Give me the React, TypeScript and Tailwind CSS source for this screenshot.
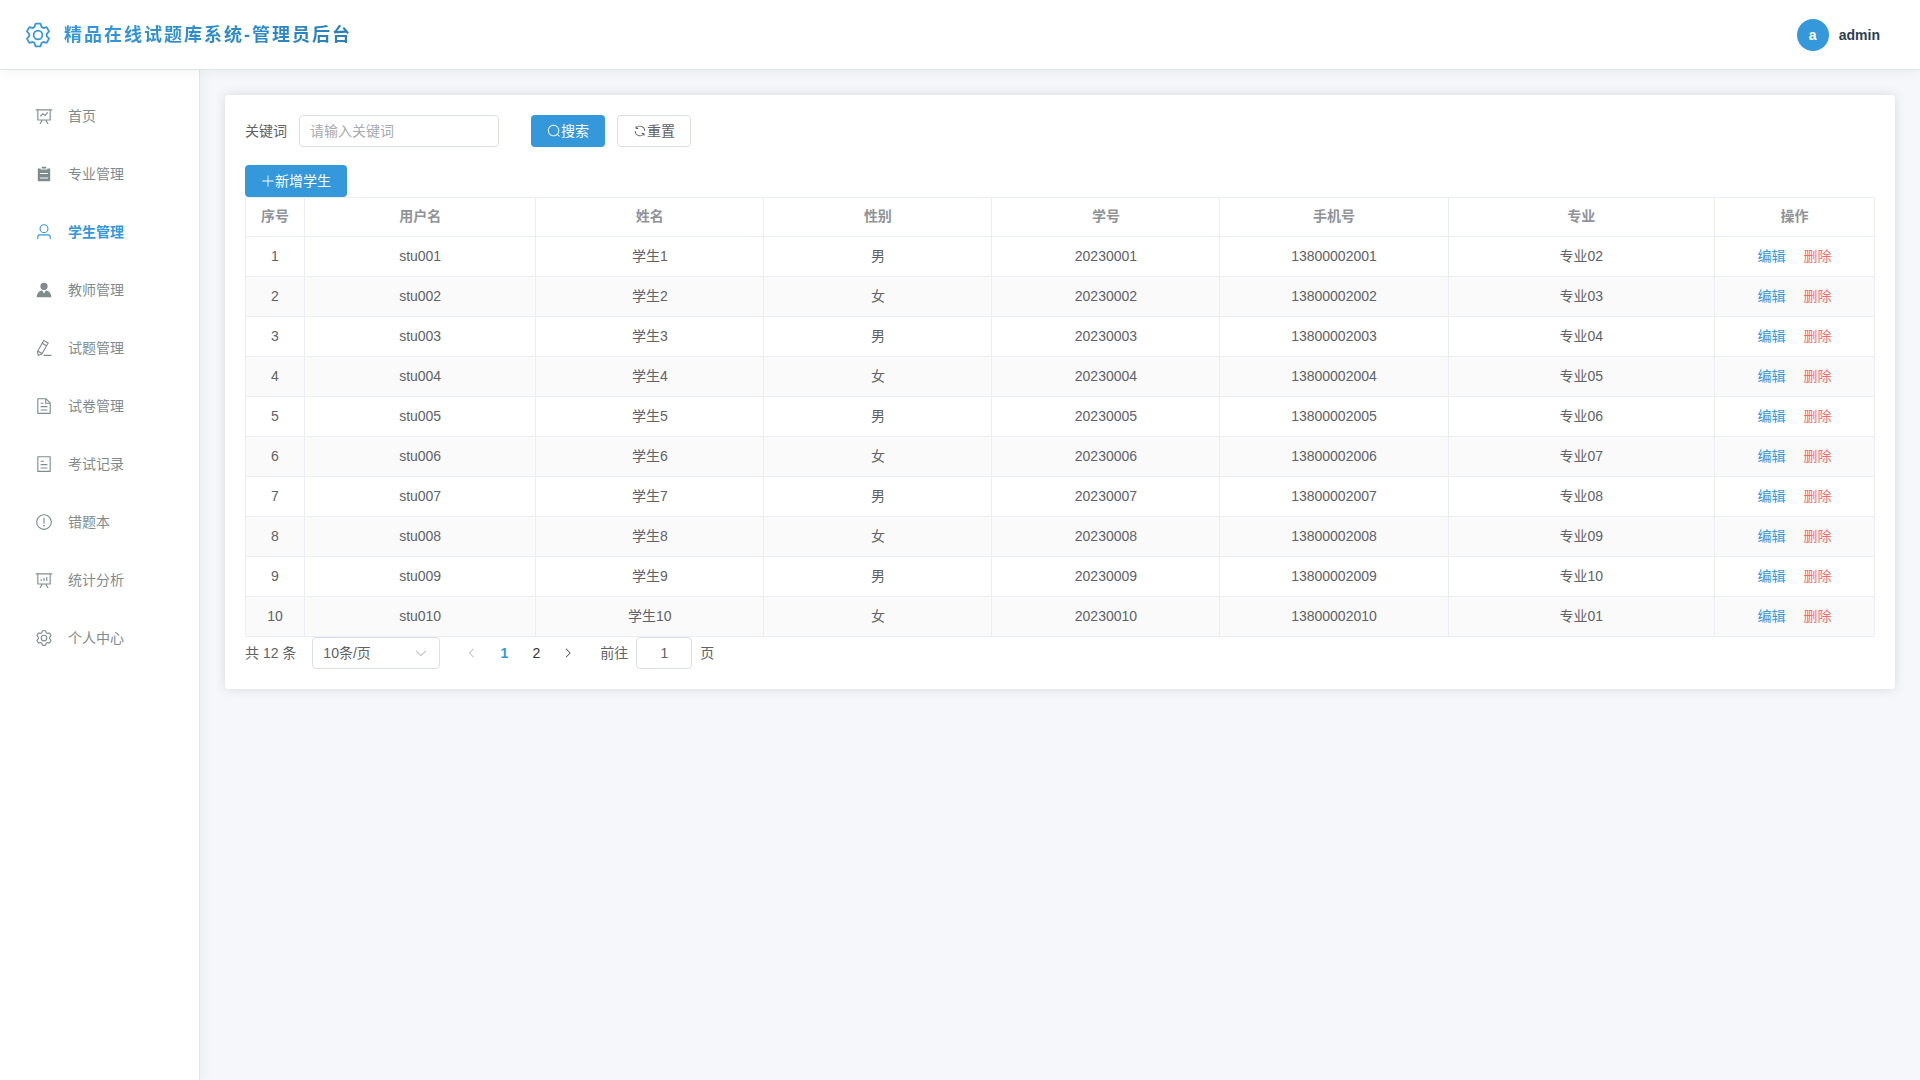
import { useState } from 'react';

const ICONS = {
  setting:
    'M600.704 64a32 32 0 0 1 30.464 22.208l35.2 109.376c14.784 7.232 28.928 15.36 42.432 24.512l112.384-24.192a32 32 0 0 1 34.432 15.36L944.32 364.8a32 32 0 0 1-4.032 37.504l-77.12 85.12a357.12 357.12 0 0 1 0 49.024l77.12 85.248a32 32 0 0 1 4.032 37.504l-88.704 153.6a32 32 0 0 1-34.432 15.296L708.8 803.904c-13.44 9.088-27.648 17.28-42.368 24.512l-35.264 109.376A32 32 0 0 1 600.704 960H423.296a32 32 0 0 1-30.464-22.208L357.696 828.48a351.616 351.616 0 0 1-42.56-24.64l-112.32 24.256a32 32 0 0 1-34.432-15.36L79.68 659.2a32 32 0 0 1 4.032-37.504l77.12-85.248a357.12 357.12 0 0 1 0-48.896l-77.12-85.248A32 32 0 0 1 79.68 364.8l88.704-153.6a32 32 0 0 1 34.432-15.296l112.32 24.256c13.568-9.152 27.776-17.408 42.56-24.64l35.2-109.312A32 32 0 0 1 423.232 64H600.64zm-23.424 64H446.72l-36.352 113.088-24.512 11.968a294.113 294.113 0 0 0-34.816 20.096l-22.656 15.36-116.224-25.088-65.28 113.152 79.68 88.192-1.92 27.136a293.12 293.12 0 0 0 0 40.192l1.92 27.136-79.808 88.192 65.344 113.152 116.224-25.024 22.656 15.296a294.113 294.113 0 0 0 34.816 20.096l24.512 11.968L446.72 896h130.688l36.48-113.152 24.448-11.904a288.282 288.282 0 0 0 34.752-20.096l22.592-15.296 116.288 25.024 65.28-113.152-79.744-88.192 1.92-27.136a293.12 293.12 0 0 0 0-40.256l-1.92-27.136 79.808-88.128-65.344-113.152-116.288 24.96-22.592-15.232a287.616 287.616 0 0 0-34.752-20.096l-24.448-11.904L577.344 128zM512 320a192 192 0 1 1 0 384 192 192 0 0 1 0-384zm0 64a128 128 0 1 0 0 256 128 128 0 0 0 0-256z',
  dataLine:
    'M359.168 768H160a32 32 0 0 1-32-32V192H64a32 32 0 0 1 0-64h896a32 32 0 1 1 0 64h-64v544a32 32 0 0 1-32 32H665.216l110.848 192h-73.856L591.36 768H433.024L322.176 960H248.32l110.848-192zM832 192H192v512h640V192zM342.656 534.656a32 32 0 1 1-45.312-45.312L444.992 341.76l125.44 94.08L679.04 300.032a32 32 0 1 1 49.92 39.936L581.632 524.224 451.008 426.24 342.656 534.592z',
  dataAnalysis:
    'm665.216 768 110.848 192h-73.856L591.36 768H433.024L322.176 960H248.32l110.848-192H160a32 32 0 0 1-32-32V192H64a32 32 0 0 1 0-64h896a32 32 0 1 1 0 64h-64v544a32 32 0 0 1-32 32H665.216zM832 192H192v512h640V192zM352 448a32 32 0 0 1 32 32v64a32 32 0 0 1-64 0v-64a32 32 0 0 1 32-32zm160-64a32 32 0 0 1 32 32v128a32 32 0 0 1-64 0V416a32 32 0 0 1 32-32zm160-64a32 32 0 0 1 32 32v192a32 32 0 1 1-64 0V352a32 32 0 0 1 32-32z',
  list: 'M704 192h160v736H160V192h160v64h384v-64zM288 512h448v-64H288v64zm0 256h448v-64H288v64zm96-576V96h256v96H384z',
  user: 'M512 512a192 192 0 1 0 0-384 192 192 0 0 0 0 384zm0 64a256 256 0 1 1 0-512 256 256 0 0 1 0 512zm320 320v-96a96 96 0 0 0-96-96H288a96 96 0 0 0-96 96v96a32 32 0 1 1-64 0v-96a160 160 0 0 1 160-160h448a160 160 0 0 1 160 160v96a32 32 0 1 1-64 0z',
  avatar:
    'M628.736 528.896A416 416 0 0 1 928 928H96a415.872 415.872 0 0 1 299.264-399.104L512 704l116.736-175.104zM720 304a208 208 0 1 1-416 0 208 208 0 0 1 416 0z',
  editPen:
    'm199.04 672.64 193.984 112 224-387.968-193.92-112-224 388.032zm-23.872 60.16 32.896 148.288 144.896-45.696L175.168 732.8zM455.04 229.248l193.92 112 56.704-98.112-193.984-112-56.64 98.112zM104.32 708.8l384-665.024 304.768 175.936L409.152 884.8h.064l-248.448 78.336L104.32 708.8zm384 254.272v-64h448v64h-448z',
  document:
    'M832 384H576V128H192v768h640V384zm-26.496-64L640 154.496V320h165.504zM160 64h480l256 256v608a32 32 0 0 1-32 32H160a32 32 0 0 1-32-32V96a32 32 0 0 1 32-32zm160 448h384v64H320v-64zm0-192h160v64H320v-64zm0 384h384v64H320v-64z',
  tickets:
    'M192 128v768h640V128H192zm-32-64h704a32 32 0 0 1 32 32v832a32 32 0 0 1-32 32H160a32 32 0 0 1-32-32V96a32 32 0 0 1 32-32zm160 448h384v64H320v-64zm0-192h192v64H320v-64zm0 384h384v64H320v-64z',
  warning:
    'M512 64a448 448 0 1 1 0 896 448 448 0 0 1 0-896zm0 832a384 384 0 0 0 0-768 384 384 0 0 0 0 768zm48-176a48 48 0 1 1-96 0 48 48 0 0 1 96 0zm-48-464a32 32 0 0 1 32 32v288a32 32 0 0 1-64 0V288a32 32 0 0 1 32-32z',
  search:
    'm795.904 750.72 124.992 124.928a32 32 0 0 1-45.248 45.248L750.656 795.904a416 416 0 1 1 45.248-45.248zM480 832a352 352 0 1 0 0-704 352 352 0 0 0 0 704z',
  refresh:
    'M771.776 794.88A384 384 0 0 1 128 512h64a320 320 0 0 0 555.712 216.448H654.72a32 32 0 1 1 0-64h149.056a32 32 0 0 1 32 32v148.928a32 32 0 1 1-64 0v-50.56zM276.288 295.616h92.992a32 32 0 0 1 0 64H220.16a32 32 0 0 1-32-32V178.56a32 32 0 0 1 64 0v50.56A384 384 0 0 1 896.128 512h-64a320 320 0 0 0-555.776-216.384z',
  plus: 'M480 480V128a32 32 0 0 1 64 0v352h352a32 32 0 1 1 0 64H544v352a32 32 0 1 1-64 0V544H128a32 32 0 0 1 0-64h352z',
  arrowDown:
    'M831.872 340.864 512 652.672 192.128 340.864a30.592 30.592 0 0 0-42.752 0 29.12 29.12 0 0 0 0 41.6L489.664 714.24a32 32 0 0 0 44.672 0l340.288-331.712a29.12 29.12 0 0 0 0-41.728 30.592 30.592 0 0 0-42.752 0z',
  arrowLeft:
    'M609.408 149.376 277.76 489.6a32 32 0 0 0 0 44.672l331.648 340.352a29.12 29.12 0 0 0 41.728 0 30.592 30.592 0 0 0 0-42.752L339.264 511.936l311.872-319.872a30.592 30.592 0 0 0 0-42.688 29.12 29.12 0 0 0-41.728 0z',
  arrowRight:
    'M340.864 149.312a30.592 30.592 0 0 0 0 42.752L652.736 512 340.864 831.872a30.592 30.592 0 0 0 0 42.752 29.12 29.12 0 0 0 41.728 0L714.24 534.336a32 32 0 0 0 0-44.672L382.592 149.376a29.12 29.12 0 0 0-41.728 0z',
};

type IconName = keyof typeof ICONS;

function Icon({ name, className }: { name: IconName; className: string }) {
  return (
    <svg viewBox="0 0 1024 1024" fill="currentColor" aria-hidden="true" className={className}>
      <path d={ICONS[name]} />
    </svg>
  );
}

const MENU: { label: string; icon: IconName }[] = [
  { label: '首页', icon: 'dataLine' },
  { label: '专业管理', icon: 'list' },
  { label: '学生管理', icon: 'user' },
  { label: '教师管理', icon: 'avatar' },
  { label: '试题管理', icon: 'editPen' },
  { label: '试卷管理', icon: 'document' },
  { label: '考试记录', icon: 'tickets' },
  { label: '错题本', icon: 'warning' },
  { label: '统计分析', icon: 'dataAnalysis' },
  { label: '个人中心', icon: 'setting' },
];

const COLUMNS = [
  { title: '序号', width: 'w-[59px]' },
  { title: '用户名', width: 'w-[14.2%]' },
  { title: '姓名', width: 'w-[14%]' },
  { title: '性别', width: 'w-[14%]' },
  { title: '学号', width: 'w-[14%]' },
  { title: '手机号', width: 'w-[14%]' },
  { title: '专业', width: '' },
  { title: '操作', width: 'w-[160px]' },
];

const STUDENTS = Array.from({ length: 10 }, (_, i) => {
  const n = i + 1;
  const two = String(n).padStart(2, '0');
  return {
    n,
    username: `stu0${two}`,
    name: `学生${n}`,
    gender: n % 2 ? '男' : '女',
    number: `202300${two}`,
    phone: `138000020${two}`,
    major: `专业${String((n % 10) + 1).padStart(2, '0')}`,
  };
});

function Header() {
  return (
    <header className="relative z-10 flex h-[70px] items-center justify-between border-b border-[#e1e4e8] bg-white pr-10 pl-6 shadow-[0_2px_12px_rgba(0,0,0,0.05)]">
      <div className="flex items-center gap-3">
        <Icon name="setting" className="size-7 text-[#3498db]" />
        <h1 className="bg-linear-to-r from-[#3498db] to-[#2980b9] bg-clip-text text-[18px] leading-7 font-bold tracking-[2px] text-transparent">
          精品在线试题库系统-管理员后台
        </h1>
      </div>
      <div className="flex items-center gap-2.5 font-bold">
        <span className="flex size-8 items-center justify-center rounded-full bg-[#3498db] text-white">a</span>
        <span className="text-[#2c3e50]">admin</span>
      </div>
    </header>
  );
}

function Sidebar() {
  return (
    <aside className="w-[200px] shrink-0 border-r border-[#e1e4e8] bg-white shadow-[2px_0_12px_rgba(0,0,0,0.05)]">
      <nav className="flex flex-col gap-2 px-[15px] py-[21px]">
        {MENU.map(({ label, icon }) => (
          <a
            key={label}
            href="#"
            className={
              label === '学生管理'
                ? 'flex h-[50px] items-center gap-[15px] pl-5 font-bold text-[#3498db]'
                : 'flex h-[50px] items-center gap-[15px] pl-5 text-[#7f8c8d]'
            }
          >
            <Icon name={icon} className="size-[18px]" />
            {label}
          </a>
        ))}
      </nav>
    </aside>
  );
}

function SearchForm() {
  return (
    <form className="mb-[18px] flex items-center" onSubmit={(e) => e.preventDefault()}>
      <label htmlFor="keyword" className="mr-3">
        关键词
      </label>
      <input
        id="keyword"
        placeholder="请输入关键词"
        className="mr-8 h-8 w-[200px] rounded border border-[#dcdfe6] px-2.5 placeholder:text-[#a8abb2]"
      />
      <button type="submit" className="mr-3 flex h-8 items-center rounded bg-[#3498db] px-4 text-white">
        <Icon name="search" className="size-3.5" />
        搜索
      </button>
      <button type="reset" className="flex h-8 items-center rounded border border-[#dcdfe6] px-[15px]">
        <Icon name="refresh" className="size-3.5" />
        重置
      </button>
    </form>
  );
}

function StudentTable() {
  const cell = 'h-10 border border-[#ebeef5] p-0';
  return (
    <table className="w-full table-fixed border-collapse text-center leading-[23px]">
      <colgroup>
        {COLUMNS.map((c) => (
          <col key={c.title} className={c.width} />
        ))}
      </colgroup>
      <thead>
        <tr className="text-[#909399]">
          {COLUMNS.map((c) => (
            <th key={c.title} className="h-[39px] border border-[#ebeef5] p-0 pb-0.5 font-bold">
              {c.title}
            </th>
          ))}
        </tr>
      </thead>
      <tbody>
        {STUDENTS.map((s) => (
          <tr key={s.n} className="even:bg-[#fafafa]">
            <td className={cell}>{s.n}</td>
            <td className={cell}>{s.username}</td>
            <td className={cell}>{s.name}</td>
            <td className={cell}>{s.gender}</td>
            <td className={cell}>{s.number}</td>
            <td className={cell}>{s.phone}</td>
            <td className={cell}>{s.major}</td>
            <td className={cell}>
              <div className="flex justify-center gap-[18px]">
                <button type="button" className="text-[#3498db]">
                  编辑
                </button>
                <button type="button" className="text-[#f56c6c]">
                  删除
                </button>
              </div>
            </td>
          </tr>
        ))}
      </tbody>
    </table>
  );
}

function Pagination() {
  const [target, setTarget] = useState('1');
  return (
    <div className="flex items-center">
      <span className="mr-4">共 12 条</span>
      <div className="relative mr-4 w-32">
        <select aria-label="每页条数" className="h-8 w-full appearance-none rounded border border-[#dcdfe6] bg-white px-2.5">
          <option>10条/页</option>
          <option>20条/页</option>
        </select>
        <Icon name="arrowDown" className="pointer-events-none absolute top-[9px] right-3 size-3.5 text-[#a8abb2]" />
      </div>
      <button type="button" disabled aria-label="上一页" className="flex size-8 items-center justify-center text-[#a8abb2]">
        <Icon name="arrowLeft" className="size-3" />
      </button>
      <button type="button" className="size-8 font-bold text-[#3498db]">
        1
      </button>
      <button type="button" className="size-8 text-[#303133]">
        2
      </button>
      <button type="button" aria-label="下一页" className="flex size-8 items-center justify-center text-[#303133]">
        <Icon name="arrowRight" className="size-3" />
      </button>
      <label htmlFor="goto" className="mr-2 ml-4">
        前往
      </label>
      <input
        id="goto"
        value={target}
        onChange={(e) => setTarget(e.target.value)}
        className="mr-2 h-8 w-14 rounded border border-[#dcdfe6] text-center"
      />
      <span>页</span>
    </div>
  );
}

export default function App() {
  return (
    <div className="flex min-h-screen flex-col bg-[#f5f7fb] font-['Liberation_Sans','Noto_Sans_CJK_SC',sans-serif] text-[14px] leading-5 text-[#606266]">
      <Header />
      <div className="flex flex-1">
        <Sidebar />
        <main className="min-w-0 flex-1 p-[25px]">
          <section className="rounded bg-white p-5 shadow-[0_0_12px_rgba(0,0,0,0.12)]">
            <SearchForm />
            <button type="button" className="flex h-8 items-center rounded bg-[#3498db] px-4 text-white">
              <Icon name="plus" className="size-3.5" />
              新增学生
            </button>
            <StudentTable />
            <Pagination />
          </section>
        </main>
      </div>
    </div>
  );
}
